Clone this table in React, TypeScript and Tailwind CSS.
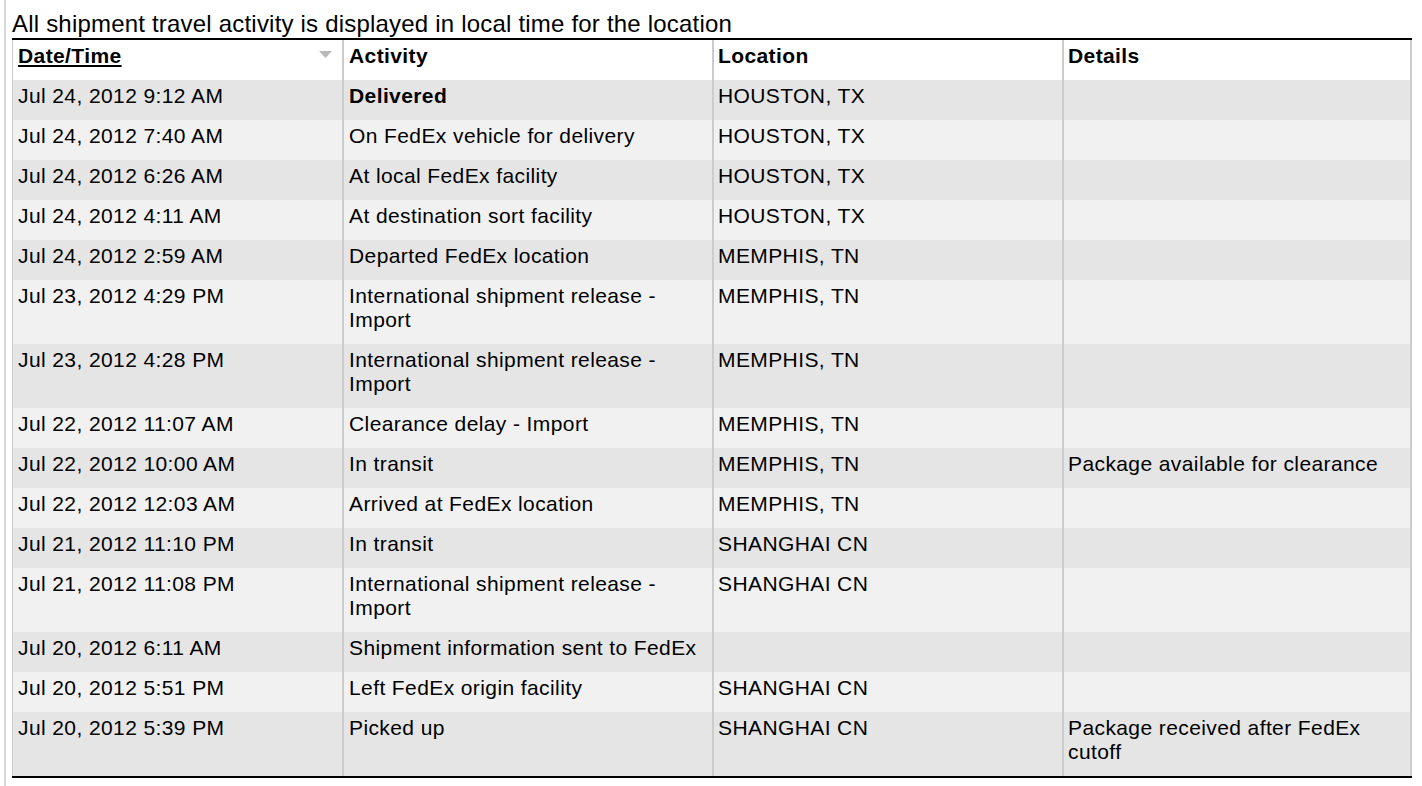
import React from "react";

type Row = { date: string; activity: string[]; location: string; details: string[]; bold?: boolean };

const rows: Row[] = [
  { date: "Jul 24, 2012 9:12 AM", activity: ["Delivered"], location: "HOUSTON, TX", details: [], bold: true },
  { date: "Jul 24, 2012 7:40 AM", activity: ["On FedEx vehicle for delivery"], location: "HOUSTON, TX", details: [] },
  { date: "Jul 24, 2012 6:26 AM", activity: ["At local FedEx facility"], location: "HOUSTON, TX", details: [] },
  { date: "Jul 24, 2012 4:11 AM", activity: ["At destination sort facility"], location: "HOUSTON, TX", details: [] },
  { date: "Jul 24, 2012 2:59 AM", activity: ["Departed FedEx location"], location: "MEMPHIS, TN", details: [] },
  { date: "Jul 23, 2012 4:29 PM", activity: ["International shipment release -", "Import"], location: "MEMPHIS, TN", details: [] },
  { date: "Jul 23, 2012 4:28 PM", activity: ["International shipment release -", "Import"], location: "MEMPHIS, TN", details: [] },
  { date: "Jul 22, 2012 11:07 AM", activity: ["Clearance delay - Import"], location: "MEMPHIS, TN", details: [] },
  { date: "Jul 22, 2012 10:00 AM", activity: ["In transit"], location: "MEMPHIS, TN", details: ["Package available for clearance"] },
  { date: "Jul 22, 2012 12:03 AM", activity: ["Arrived at FedEx location"], location: "MEMPHIS, TN", details: [] },
  { date: "Jul 21, 2012 11:10 PM", activity: ["In transit"], location: "SHANGHAI CN", details: [] },
  { date: "Jul 21, 2012 11:08 PM", activity: ["International shipment release -", "Import"], location: "SHANGHAI CN", details: [] },
  { date: "Jul 20, 2012 6:11 AM", activity: ["Shipment information sent to FedEx"], location: "", details: [] },
  { date: "Jul 20, 2012 5:51 PM", activity: ["Left FedEx origin facility"], location: "SHANGHAI CN", details: [] },
  { date: "Jul 20, 2012 5:39 PM", activity: ["Picked up"], location: "SHANGHAI CN", details: ["Package received after FedEx", "cutoff"] },
];

function Lines({ lines }: { lines: string[] }) {
  return (
    <>
      {lines.map((l, i) => (
        <div key={i} className="whitespace-nowrap">
          {l}
        </div>
      ))}
    </>
  );
}

export default function App() {
  return (
    <div
      className="min-h-[786px] w-[1422px] bg-white pl-[4px] text-black"
      style={{ fontFamily: '"Liberation Sans", Arial, Helvetica, sans-serif' }}
    >
      <div className="min-h-[786px] border-l-2 border-[#d8d8d8] pl-[6px]">
        <div className="pt-[9px] text-[24px] leading-[29px] tracking-[0.2px] whitespace-nowrap">
          All shipment travel activity is displayed in local time for the location
        </div>
        <div className="w-[1400px] border-t-2 border-b-2 border-black text-[21px] leading-[24px] tracking-[0.4px]">
          <div className="grid grid-cols-[332px_370px_350px_348px] bg-white font-bold">
            <div className="flex justify-between border-l border-r-2 border-[#cccccc] pl-[5px] pt-[4px] pb-[12px]">
              <span className="underline underline-offset-[2px]">Date/Time</span>
              <svg width="13" height="7" viewBox="0 0 13 7" className="mt-[7px] mr-[10px] shrink-0">
                <polygon points="0,0 13,0 6.5,7" fill="#b8b8b8" />
              </svg>
            </div>
            <div className="border-r-2 border-[#cccccc] pl-[5px] pt-[4px] pb-[12px]">Activity</div>
            <div className="border-r-2 border-[#cccccc] pl-[4px] pt-[4px] pb-[12px]">Location</div>
            <div className="border-r-2 border-[#cccccc] pl-[4px] pt-[4px] pb-[12px]">Details</div>
          </div>
          {rows.map((r, i) => (
            <div
              key={i}
              className={`grid grid-cols-[332px_370px_350px_348px] ${i % 2 === 0 ? "bg-[#e5e5e5]" : "bg-[#f1f1f1]"}`}
            >
              <div className="border-l border-r-2 border-[#cccccc] pl-[5px] pt-[4px] pb-[12px] whitespace-nowrap">{r.date}</div>
              <div className={`border-r-2 border-[#cccccc] pl-[5px] pt-[4px] pb-[12px] ${r.bold ? "font-bold" : ""}`}>
                <Lines lines={r.activity} />
              </div>
              <div className="border-r-2 border-[#cccccc] pl-[4px] pt-[4px] pb-[12px] whitespace-nowrap">{r.location}</div>
              <div className="border-r-2 border-[#cccccc] pl-[4px] pt-[4px] pb-[12px]">
                <Lines lines={r.details} />
              </div>
            </div>
          ))}
        </div>
      </div>
    </div>
  );
}
